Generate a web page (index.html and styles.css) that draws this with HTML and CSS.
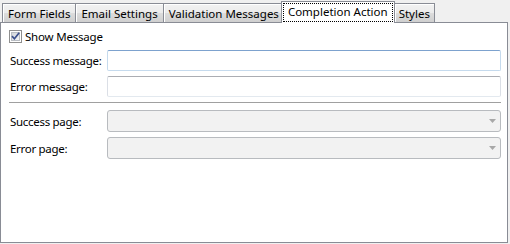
FILE: index.html
```html
<!DOCTYPE html>
<html lang="en">
<head>
  <meta charset="UTF-8" />
  <title>Form Settings</title>
  <link rel="stylesheet" href="styles.css">
</head>
<body>
  <div class="tabs">
    <div class="tab">Form Fields</div>
    <div class="tab">Email Settings</div>
    <div class="tab">Validation Messages</div>
    <div class="tab tab-active"><span class="focus-box">Completion Action</span></div>
    <div class="tab">Styles</div>
  </div>

  <div class="panel">
    <label class="check-row">
      <svg class="checkbox" width="13" height="13" viewBox="0 0 13 13">
        <defs>
          <linearGradient id="boxFill" x1="0" y1="0" x2="1" y2="1">
            <stop offset="0" stop-color="#cfd3d8" />
            <stop offset="1" stop-color="#f6f7f8" />
          </linearGradient>
        </defs>
        <rect x="0.5" y="0.5" width="12" height="12" fill="#fff" stroke="#8f8f8f" />
        <rect x="2.5" y="2.5" width="8" height="8" fill="url(#boxFill)" stroke="#b9bdc3" />
        <path d="M3 6.2 L5.4 8.8 L10.2 2.8" fill="none" stroke="#3a4f8c" stroke-width="1.7" />
      </svg>
      <span>Show Message</span>
    </label>

    <div class="form-grid">
      <span class="label">Success message:</span>
      <div class="textbox textbox-hot"></div>

      <span class="label">Error message:</span>
      <div class="textbox"></div>

      <div class="separator"></div>

      <span class="label">Success page:</span>
      <div class="combo">
        <svg width="7" height="4" viewBox="0 0 7 4"><path d="M0 0 H7 L3.5 4 Z" fill="#a8a8a8" /></svg>
      </div>

      <span class="label">Error page:</span>
      <div class="combo">
        <svg width="7" height="4" viewBox="0 0 7 4"><path d="M0 0 H7 L3.5 4 Z" fill="#a8a8a8" /></svg>
      </div>
    </div>
  </div>
</body>
</html>
```

FILE: styles.css
```css
* { margin: 0; padding: 0; box-sizing: border-box; }

html, body {
  height: 100%;
  background: #f0f0f0;
  font-family: 'Noto Sans', 'Open Sans', sans-serif;
  font-size: 11.5px;
  color: #000;
}

/* tab strip */
.tabs {
  display: flex; align-items: flex-end;
  height: 22px; padding-left: 2px;
}

.tab {
  height: 19px; padding: 0 5px;
  border: 1px solid #898c95; border-bottom: none;
  margin-right: -1px;
  background: linear-gradient(#f2f2f2, #ebebeb 50%, #dddddd 50%, #cfcfcf);
  box-shadow: inset 1px 1px 0 #fff;
  line-height: 19px;
  white-space: nowrap;
}
.tab:nth-child(3) { padding-right: 4px; }
.tab:last-child { padding: 0 4px; }

.tab-active {
  height: 22px; margin: 0 -1px -1px -2px;
  padding: 1px 1px 0;
  background: #fff; box-shadow: none;
  position: relative; z-index: 1;
  line-height: 15px;
}

.focus-box {
  display: block; height: 19px;
  border: 1px dotted #000;
  padding: 0 4px;
}

/* content panel */
.panel {
  width: 508px; height: 221px;
  border: 1px solid #898c95;
  background: #fff;
  padding: 6px 6px 0 8px;
}

.check-row {
  display: flex; align-items: center; gap: 3px;
  height: 15px;
  letter-spacing: -0.2px;
}

.form-grid {
  display: grid;
  grid-template-columns: 98px 394px;
  row-gap: 5px;
  align-items: center;
  margin-top: 6px;
}

.label { padding-left: 1px; letter-spacing: -0.3px; }

.textbox {
  height: 21px;
  border: 1px solid #e3e9ef; border-top-color: #abadb3;
  border-left-color: #dbdfe6; border-right-color: #dbdfe6;
  border-radius: 2px;
  background: #fff;
}
.textbox-hot {
  border-color: #c5daed; border-top-color: #7da2ce;
}

.separator {
  grid-column: 1 / -1;
  height: 2px; margin-bottom: 1px;
  border-top: 1px solid #a0a0a0;
  border-bottom: 1px solid #fff;
}

.combo {
  height: 22px;
  border: 1px solid #b8bbbf;
  border-radius: 3px;
  background: #f2f2f2;
  display: flex; align-items: center; justify-content: flex-end;
  padding-right: 4px;
}
```
